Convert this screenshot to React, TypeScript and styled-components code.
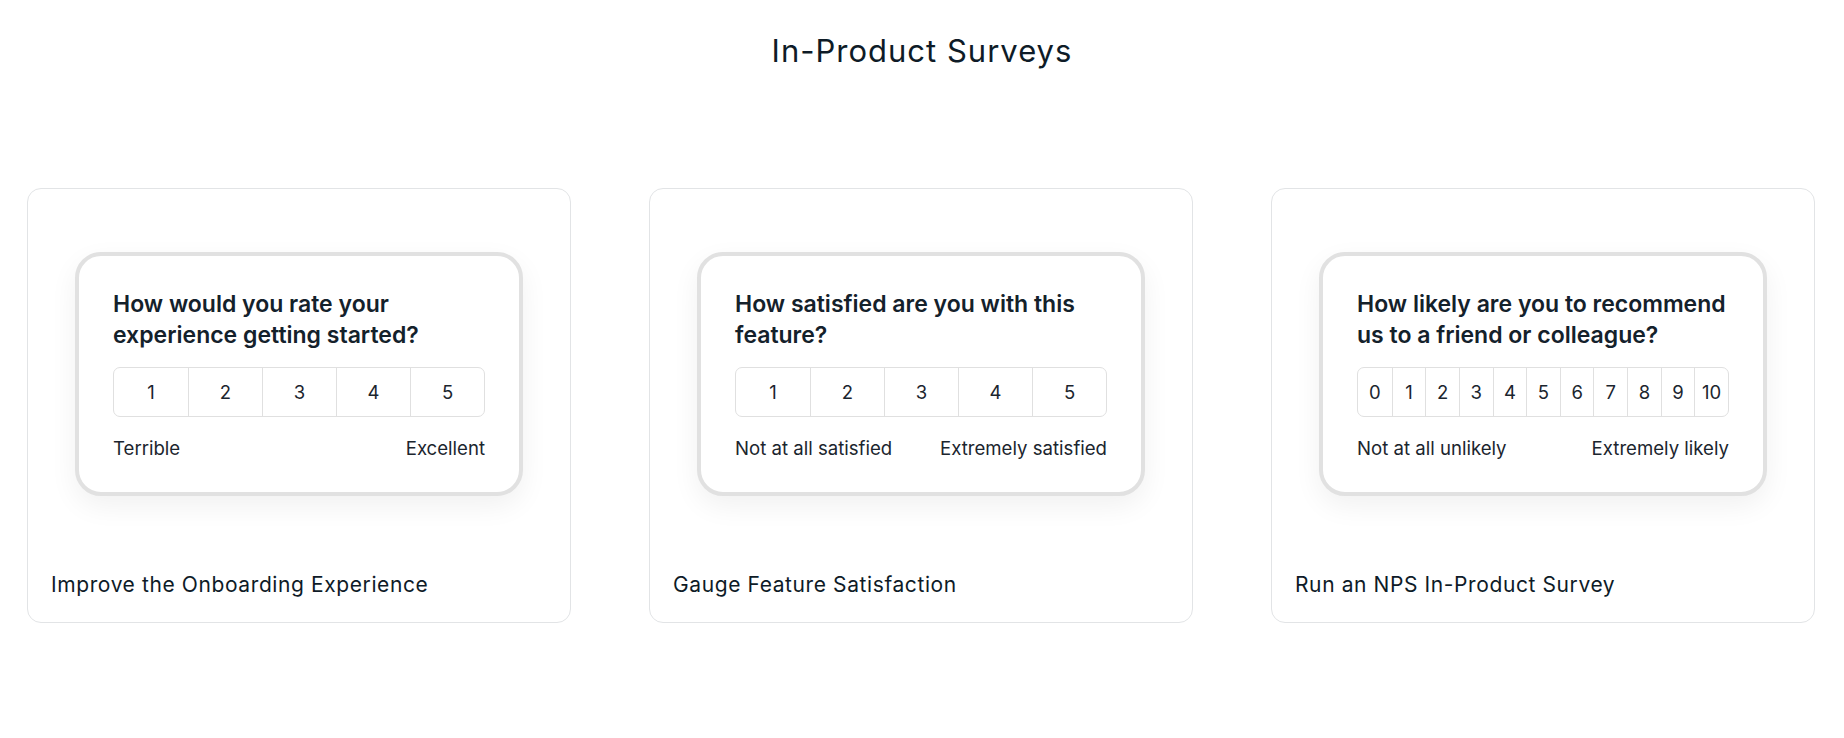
import styled, { createGlobalStyle } from "styled-components"

const GlobalStyle = createGlobalStyle`
  html, body {
    margin: 0;
    padding: 0;
    background: #ffffff;
  }
  body {
    font-family: Inter, "Liberation Sans", sans-serif;
    color: #13202b;
  }
`

const Page = styled.main`
  width: 1844px;
  height: 738px;
  box-sizing: border-box;
  padding-top: 31px;
`

const Heading = styled.h1`
  margin: 0;
  text-align: center;
  font-weight: 400;
  font-size: 31px;
  line-height: 40px;
  letter-spacing: 1px;
  color: #0e1b27;
`

const CardGrid = styled.section`
  display: grid;
  grid-template-columns: repeat(3, 544px);
  gap: 78px;
  padding: 0 0 0 27px;
  margin-top: 117px;
`

const Card = styled.article`
  height: 435px;
  box-sizing: border-box;
  border: 1px solid #e2e4e6;
  border-radius: 14px;
  display: flex;
  flex-direction: column;
  padding: 63px 47px 23px 47px;
`

const Survey = styled.div`
  border: 4px solid #e1e1e1;
  border-radius: 26px;
  background: #fff;
  padding: 33px 34px 32px;
  box-shadow: 0 10px 28px rgba(0, 0, 0, 0.06);
`

const Question = styled.h3`
  margin: 0;
  font-size: 23px;
  line-height: 31px;
  font-weight: 600;
  color: #14212b;
`

const Scale = styled.div<{ $count: number }>`
  display: grid;
  grid-template-columns: repeat(${p => p.$count}, 1fr);
  height: 50px;
  margin-top: 16px;
  box-sizing: border-box;
  border: 1px solid #e0e0e0;
  border-radius: 7px;
  overflow: hidden;
`

const ScaleCell = styled.div`
  display: flex;
  align-items: center;
  justify-content: center;
  font-size: 18.5px;
  color: #1b252e;
  & + & {
    border-left: 1px solid #e0e0e0;
  }
`

const Labels = styled.div`
  display: flex;
  justify-content: space-between;
  margin-top: 19px;
  font-size: 18.6px;
  line-height: 24px;
  color: #1b252e;
`

const CardTitle = styled.h2`
  margin: auto 0 0 -24px;
  font-weight: 400;
  font-size: 21px;
  line-height: 28px;
  letter-spacing: 0.6px;
  color: #0e1b27;
`

type SurveyData = {
  question: string
  values: number[]
  low: string
  high: string
  title: string
}

const range = (from: number, to: number) =>
  Array.from({ length: to - from + 1 }, (_, i) => from + i)

const surveys: SurveyData[] = [
  {
    question: "How would you rate your experience getting started?",
    values: range(1, 5),
    low: "Terrible",
    high: "Excellent",
    title: "Improve the Onboarding Experience",
  },
  {
    question: "How satisfied are you with this feature?",
    values: range(1, 5),
    low: "Not at all satisfied",
    high: "Extremely satisfied",
    title: "Gauge Feature Satisfaction",
  },
  {
    question: "How likely are you to recommend us to a friend or colleague?",
    values: range(0, 10),
    low: "Not at all unlikely",
    high: "Extremely likely",
    title: "Run an NPS In-Product Survey",
  },
]

function App() {
  return (
    <>
      <GlobalStyle />
      <Page>
        <Heading>In-Product Surveys</Heading>
        <CardGrid>
          {surveys.map(s => (
            <Card key={s.title}>
              <Survey>
                <Question>{s.question}</Question>
                <Scale $count={s.values.length}>
                  {s.values.map(v => (
                    <ScaleCell key={v}>{v}</ScaleCell>
                  ))}
                </Scale>
                <Labels>
                  <span>{s.low}</span>
                  <span>{s.high}</span>
                </Labels>
              </Survey>
              <CardTitle>{s.title}</CardTitle>
            </Card>
          ))}
        </CardGrid>
      </Page>
    </>
  )
}

export default App
